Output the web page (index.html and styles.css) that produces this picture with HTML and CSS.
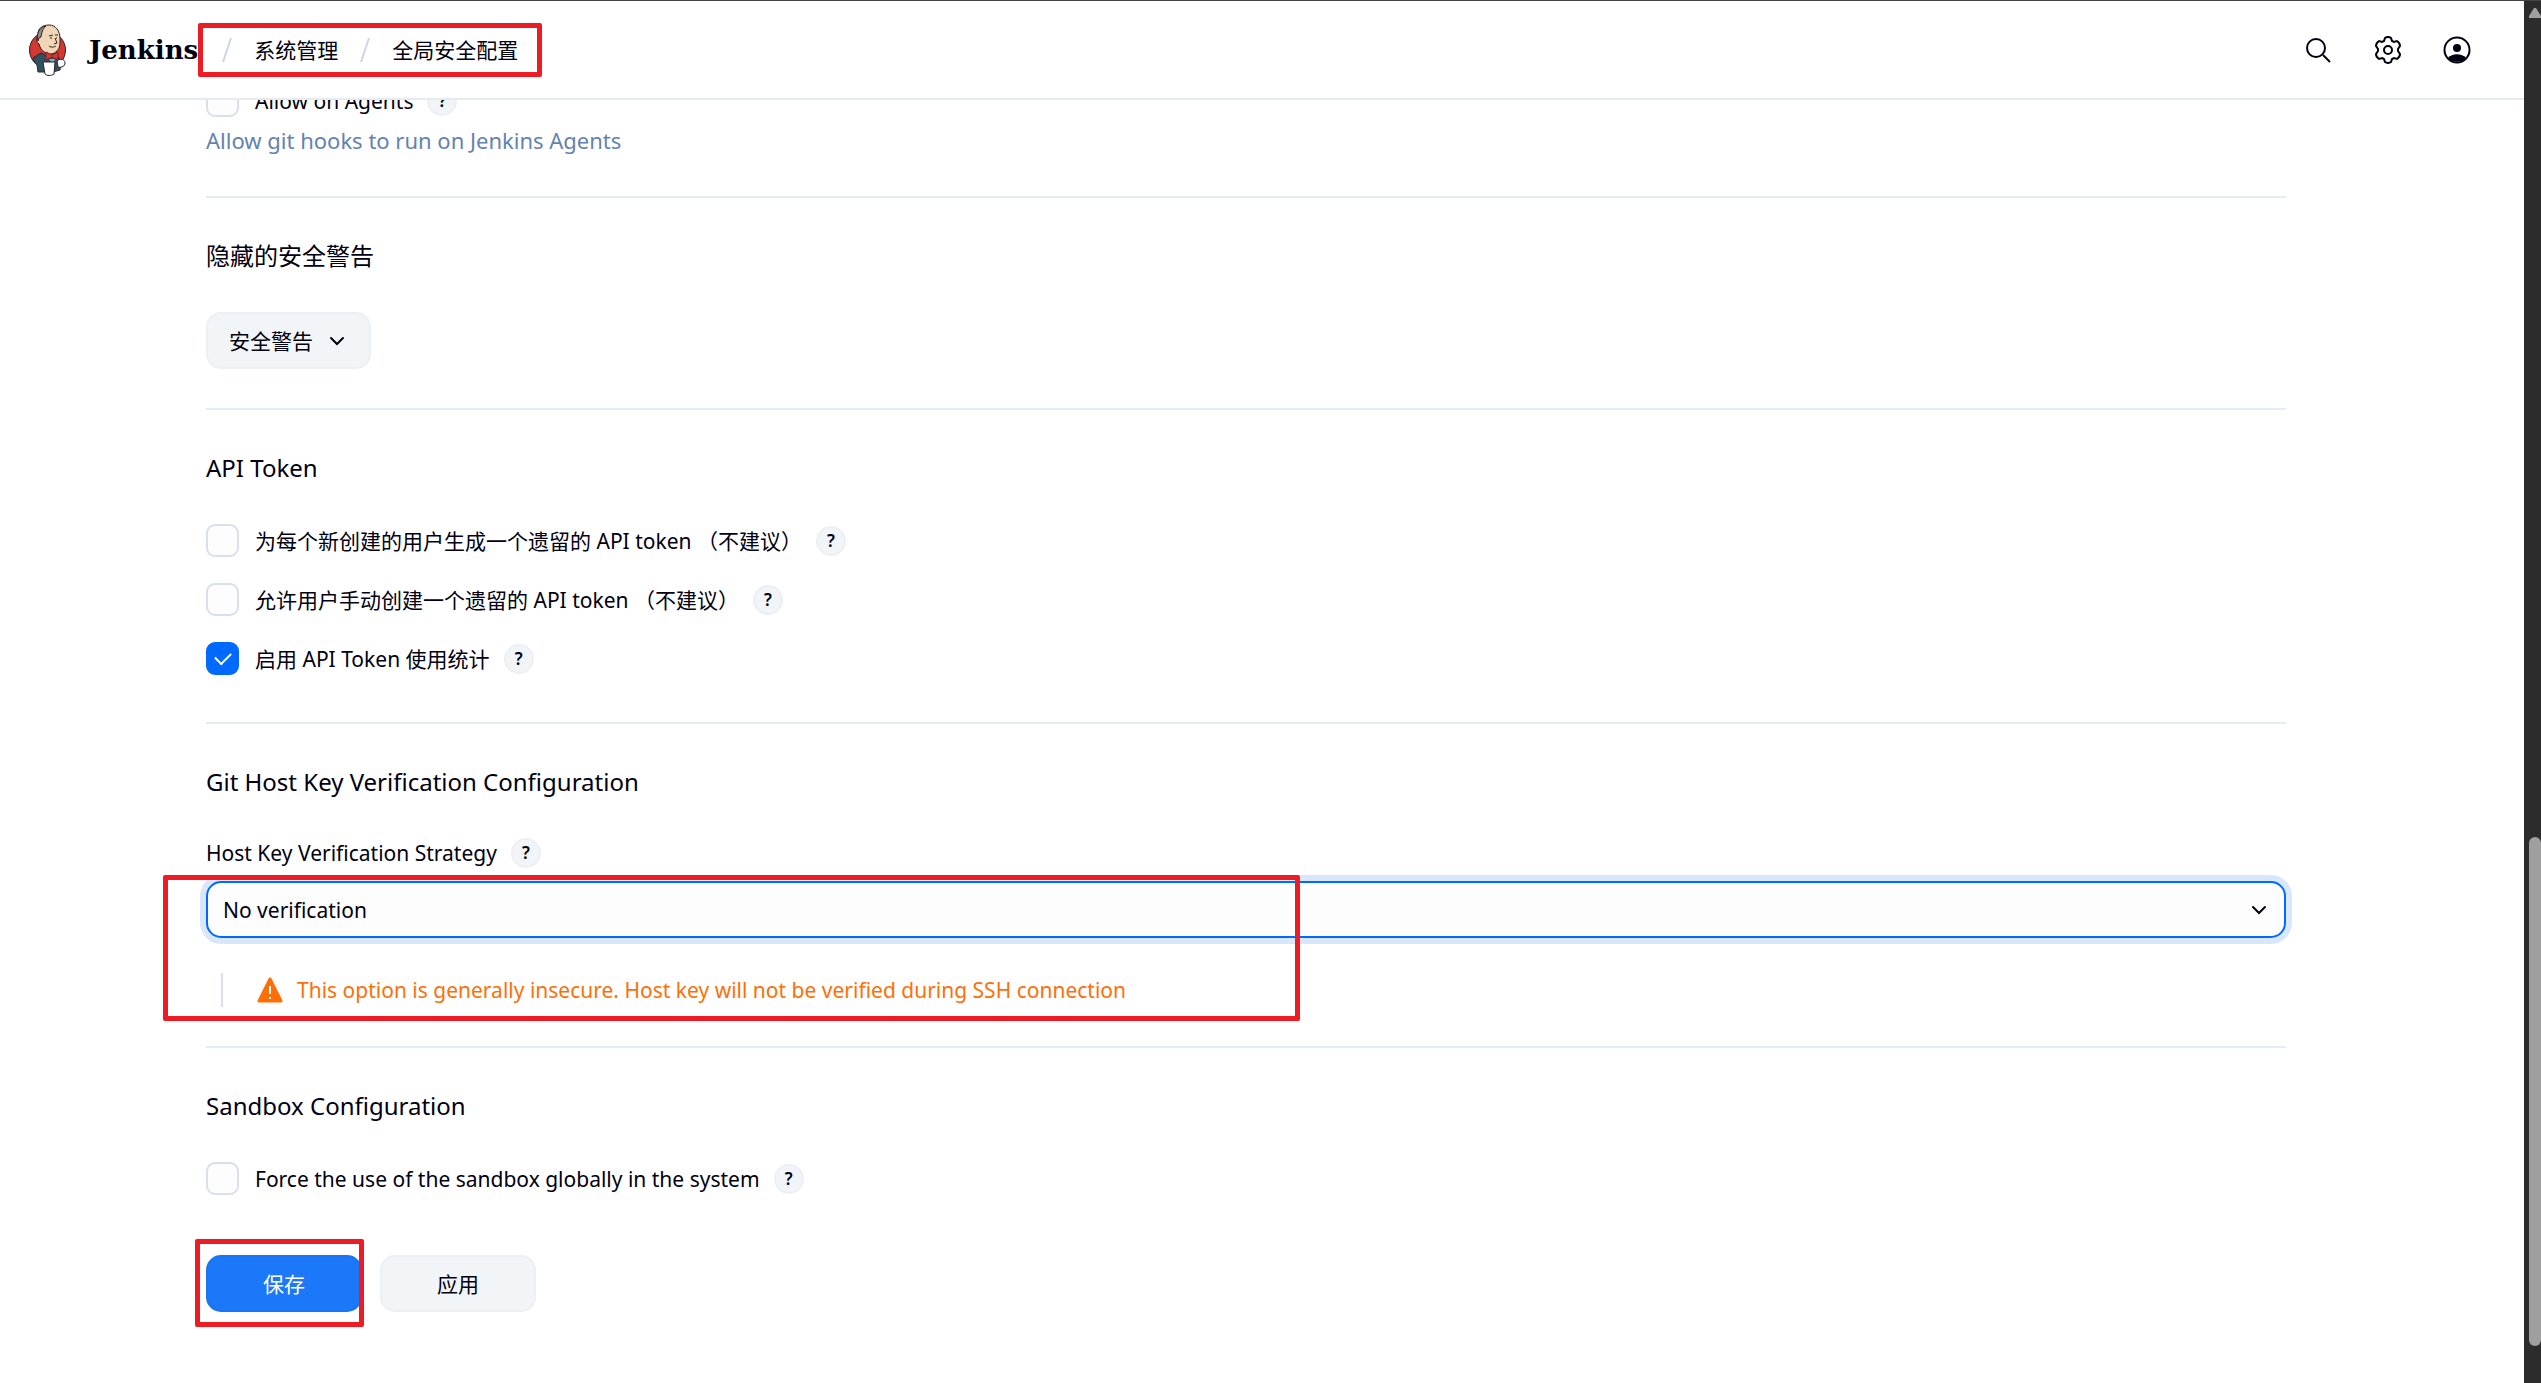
FILE: index.html
```html
<!DOCTYPE html>
<html lang="zh-CN">
<head>
  <meta charset="utf-8" />
  <meta name="viewport" content="width=device-width, initial-scale=1" />
  <title>全局安全配置 - Jenkins</title>
  <link rel="stylesheet" href="styles.css">
</head>
<body>
  <div class="page">
    <header class="header">
      <a class="brand" href="#">
        <svg class="logo" viewBox="0 0 37 52" aria-hidden="true">
          <ellipse cx="18.500" cy="26" rx="18" ry="18" fill="#d33833" stroke="#2b2222" />
          <path d="M4 34l8-5 6 3 9-2 5 7-1 9-7 2H9l-1-7-3-3z" fill="#335061" stroke="#1c2b35" />
          <path d="M9 12C8 4 14 1 20 1c7 0 11 6 11 14 0 5 0 9-3 12-3 3-7 4-11 2-4-2-6-5-7-9-3-2-3-6-1-8z" fill="#f0d6b7" stroke="#2b2222" />
          <path d="M9 17c-2-7 1-14 8-15-4 3-4 7-5 11l-2 1z" fill="#8d8d8d" stroke="#2b2222" />
          <path d="M20 12l4-1M26 11l3 0M21 14h2M27 14h1M26 14l2 5-3 1M20 22c3 2 5 1 7 0" fill="none" stroke="#2b2222" />
          <path d="M17 28l6 3 6-3v8l-6-3-6 3z" fill="#d33833" stroke="#7d1f1c" />
          <path d="M20 35l6 0-2 5z" fill="#81b0c4" />
          <path d="M28 37c3-3 8-2 8 2 0 3-3 5-7 4z" fill="#fff" stroke="#2b2222" />
          <path d="M14 38h12l-1 12c-3 2-7 2-9 0z" fill="#fff" stroke="#2b2222" />
        </svg>
        <span>Jenkins</span>
      </a>
      <nav class="breadcrumbs marked">
        <svg class="slash" viewBox="0 0 10 28" aria-hidden="true"><path d="M9 2L1 26" /></svg>
        <a href="#">系统管理</a>
        <svg class="slash" viewBox="0 0 10 28" aria-hidden="true"><path d="M9 2L1 26" /></svg>
        <a href="#">全局安全配置</a>
      </nav>
      <div class="actions">
        <button type="button" aria-label="Search">
          <svg viewBox="0 0 28 28"><circle cx="11" cy="12" r="9" /><path d="M18 19l7 7" /></svg>
        </button>
        <button type="button" aria-label="Manage">
          <svg viewBox="0 0 28 28"><circle cx="14" cy="14" r="4" /><path d="M11 2Q14 0 17 2L18 5L20 6L23 5Q26 7 26 10L24 13V15L26 18Q26 21 23 23L20 22L18 23L17 26Q14 28 11 26L10 23L8 22L5 23Q2 21 2 18L4 15V13L2 10Q2 7 5 5L8 6L10 5Z" /></svg>
        </button>
        <button type="button" aria-label="User">
          <svg viewBox="0 0 28 28"><circle cx="14" cy="14" r="12.500" /><circle class="solid" cx="14" cy="12" r="4" /><path class="solid" d="M5 22c4-5 14-5 18 0-4 5-14 5-18 0z" /></svg>
        </button>
      </div>
    </header>

    <main>
      <form>
        <section>
          <div class="check">
            <input type="checkbox" id="agents" />
            <label for="agents">Allow on Agents</label>
            <button type="button" class="help">?</button>
          </div>
          <p class="description">Allow git hooks to run on Jenkins Agents</p>
        </section>

        <section>
          <h2>隐藏的安全警告</h2>
          <button type="button" class="btn">
            安全警告
            <svg class="chevron" viewBox="0 0 16 10" aria-hidden="true"><path d="M2 2l6 6 6-6" /></svg>
          </button>
        </section>

        <section>
          <h2>API Token</h2>
          <div class="checks">
            <div class="check">
              <input type="checkbox" id="legacy-new" />
              <label for="legacy-new">为每个新创建的用户生成一个遗留的 API token （不建议）</label>
              <button type="button" class="help">?</button>
            </div>
            <div class="check">
              <input type="checkbox" id="legacy-manual" />
              <label for="legacy-manual">允许用户手动创建一个遗留的 API token （不建议）</label>
              <button type="button" class="help">?</button>
            </div>
            <div class="check">
              <input type="checkbox" id="stats" checked />
              <label for="stats">启用 API Token 使用统计</label>
              <button type="button" class="help">?</button>
            </div>
          </div>
        </section>

        <section>
          <h2>Git Host Key Verification Configuration</h2>
          <div class="field-label">
            <label for="strategy">Host Key Verification Strategy</label>
            <button type="button" class="help">?</button>
          </div>
          <div class="strategy marked">
            <div class="select">
              <select id="strategy">
                <option>No verification</option>
              </select>
              <svg class="chevron" viewBox="0 0 16 10" aria-hidden="true"><path d="M2 2l6 6 6-6" /></svg>
            </div>
            <div class="warning">
              <svg viewBox="0 0 26 26" aria-hidden="true">
                <path d="M13 2L24 24H2z" fill="#fe6f07" stroke="#fe6f07" stroke-width="3" stroke-linejoin="round" />
                <path d="M13 9v8M13 20v2" stroke="#fff" stroke-width="2" />
              </svg>
              This option is generally insecure. Host key will not be verified during SSH connection
            </div>
          </div>
        </section>

        <section>
          <h2>Sandbox Configuration</h2>
          <div class="check">
            <input type="checkbox" id="sandbox" />
            <label for="sandbox">Force the use of the sandbox globally in the system</label>
            <button type="button" class="help">?</button>
          </div>
        </section>

        <div class="buttons">
          <div class="save marked">
            <button type="submit" class="btn primary">保存</button>
          </div>
          <button type="button" class="btn">应用</button>
        </div>
      </form>
    </main>
  </div>

  <div class="scrollbar" aria-hidden="true">
    <svg viewBox="0 0 13 12"><path d="M6 1h2l5 8v2H1V9z" /></svg>
    <div class="thumb"></div>
  </div>
</body>
</html>
```
FILE: styles.css
```css
* {
  box-sizing: border-box;
}
body {
  display: grid;
  grid-template-columns: 1fr 17px;
  min-height: 100vh;
  margin: 0;
  border-top: 1px solid #444;
  background: #fff;
  color: #000010;
  font-family: "Noto Sans", "Noto Sans CJK SC", sans-serif;
  font-size: 21px;
  line-height: 30px;
}
a {
  color: inherit;
  text-decoration: none;
}
button,
select {
  font: inherit;
  color: inherit;
}

/* header */
.header {
  position: sticky;
  top: 0;
  z-index: 1;
  display: flex;
  align-items: center;
  height: 99px;
  padding: 0 51px 0 29px;
  border-bottom: 2px solid #e6ebf1;
  background: #fff;
}
.brand {
  display: flex;
  align-items: center;
  gap: 23px;
  font-family: "DejaVu Serif", serif;
  font-size: 26px;
  font-weight: 700;
}
.logo {
  width: 37px;
  height: 52px;
}
.breadcrumbs {
  display: flex;
  align-items: center;
  gap: 22px;
  padding: 0 24px;
}
.slash {
  width: 10px;
  height: 28px;
  fill: none;
  stroke: #ccd5e5;
  stroke-width: 2;
}
.actions {
  display: flex;
  gap: 37px;
  margin-left: auto;
}
.actions button {
  display: flex;
  padding: 0;
  border: none;
  background: none;
}
.actions svg {
  width: 32px;
  height: 28px;
  fill: none;
  stroke: #000010;
  stroke-width: 2;
}
.actions .solid {
  fill: #000010;
  stroke: none;
}

/* red outlines drawn over the parts to change */
.marked {
  position: relative;
}
.marked::after {
  content: "";
  position: absolute;
  border: 5px solid #ed1c24;
  border-radius: 2px;
  pointer-events: none;
}
.breadcrumbs::after {
  inset: -12px 0;
}
.strategy::after {
  inset: -6px 986px -14px -43px;
}
.save::after {
  inset: -16px -2px -15px -11px;
}

/* form */
main {
  margin-top: -16px;
  padding: 0 238px 70px 206px;
}
section {
  padding-bottom: 39px;
  border-bottom: 2px solid #e6ebf1;
  margin-bottom: 42px;
}
section:last-of-type {
  border: none;
  margin-bottom: 21px;
}
h2 {
  margin: 0 0 40px;
  font-size: 24px;
  font-weight: 400;
  line-height: 32px;
}
.check,
.field-label {
  display: flex;
  align-items: center;
}
.checks {
  display: grid;
  gap: 26px;
  padding-bottom: 8px;
}
.check input {
  display: grid;
  place-items: center;
  width: 33px;
  height: 33px;
  margin: 0 16px 0 0;
  border: 2px solid #d9dfec;
  border-radius: 9px;
  background: #fdfdfd;
  appearance: none;
}
.check input:checked {
  border-color: #006aff;
  background: #006aff;
}
.check input:checked::before {
  content: "";
  width: 8px;
  height: 13px;
  margin-bottom: 4px;
  border: solid #fff;
  border-width: 0 2px 2px 0;
  transform: rotate(45deg);
}
.help {
  width: 30px;
  height: 30px;
  margin-left: 14px;
  padding: 0;
  border: 2px solid #eceff4;
  border-radius: 50%;
  background: #f2f5f8;
  font-size: 17px;
  font-weight: 600;
  line-height: 26px;
}
.description {
  margin: 8px 0 2px;
  color: #6383ae;
  font-size: 22px;
}
.btn {
  display: inline-flex;
  align-items: center;
  justify-content: center;
  gap: 16px;
  min-width: 156px;
  height: 57px;
  padding: 0 21px;
  border: 2px solid #ecf0f4;
  border-radius: 15px;
  background: #f2f5f8;
}
.btn.primary {
  border-color: #1a75f5;
  background: #1b78f8;
  color: #fff;
}
.btn .chevron {
  margin-right: 3px;
}
.chevron {
  width: 16px;
  height: 10px;
  fill: none;
  stroke: #000010;
  stroke-width: 2;
  stroke-linecap: round;
}
.field-label {
  margin-bottom: 13px;
}
.select {
  position: relative;
}
.select select {
  width: 100%;
  height: 57px;
  padding: 0 15px;
  border: 2px solid #006aff;
  border-radius: 15px;
  background: #fdfdfd;
  box-shadow: 0 0 0 6px #d9e7fd;
  appearance: none;
}
.select .chevron {
  position: absolute;
  top: 24px;
  right: 19px;
}
.warning {
  display: flex;
  align-items: center;
  gap: 14px;
  height: 34px;
  margin: 35px 0 0 15px;
  padding-left: 34px;
  border-left: 2px solid #d9dfec;
  color: #fe6f07;
}
.warning svg {
  width: 26px;
  height: 26px;
}
.buttons {
  display: flex;
  gap: 18px;
}

/* scrollbar */
.scrollbar {
  display: flex;
  flex-direction: column;
  padding: 6px 0 37px 4px;
  background: #2c2c2c;
}
.scrollbar svg {
  width: 13px;
  height: 12px;
  margin-bottom: auto;
  fill: #9f9f9f;
}
.thumb {
  height: 38%;
  margin-left: 1px;
  border-radius: 6px;
  background: #9f9f9f;
}
```
